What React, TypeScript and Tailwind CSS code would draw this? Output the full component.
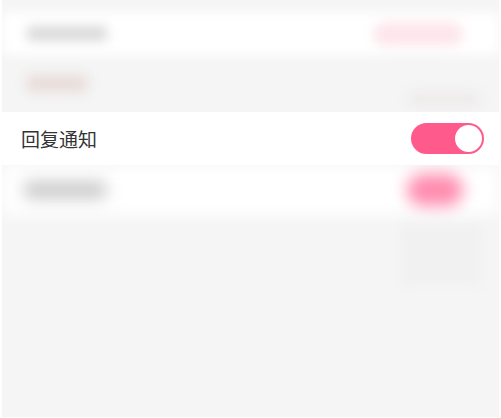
import React from "react";

export default function App() {
  return (
    <div
      className="relative w-[501px] h-[418px] bg-white overflow-hidden"
      style={{ fontFamily: '"Noto Sans CJK SC", "Noto Sans", sans-serif' }}
    >
      <div className="flex flex-col mx-[2px] h-[417px] bg-[#f5f5f5] overflow-hidden">
        <div className="h-[12px]" />
        {/* blurred row 1 */}
        <div className="h-[43px] bg-white flex items-center justify-between pl-[25px] pr-[36px] blur-[6px]">
          <div className="w-[80px] h-[15px] rounded bg-[#d9d9d9]" />
          <div className="w-[90px] h-[24px] rounded-full bg-[#fde6ec]" />
        </div>
        {/* blurred gray section */}
        <div className="h-[57px] flex items-center justify-between pl-[25px] pr-[20px] blur-[6px]">
          <div className="w-[60px] h-[17px] rounded bg-[#e8dcd8]" />
          <div className="w-[70px] h-[14px] mt-[30px] rounded bg-[#eeeaea]" />
        </div>
        <div className="h-[53px]" />
        {/* blurred row 4 */}
        <div className="h-[50px] bg-white flex items-center justify-between pl-[22px] pr-[36px] blur-[8px]">
          <div className="w-[82px] h-[18px] rounded bg-[#cbcbcb]" />
          <div className="w-[56px] h-[32px] rounded-full bg-[#ff8db0]" />
        </div>
        <div className="flex-1 flex justify-end pr-[18px] blur-[5px]">
          <div className="w-[80px] h-[60px] mt-[10px] bg-[#f1f1f1]" />
        </div>
      </div>
      {/* highlighted row */}
      <div className="absolute left-0 right-0 top-[112px] h-[53px] bg-white flex items-center justify-between pl-[21px] pr-[17px]">
        <span className="text-[19px] leading-none text-[#333333]">回复通知</span>
        <div className="w-[73px] h-[31px] rounded-full bg-[#ff5a8c] flex items-center justify-end pr-[2px]">
          <div className="w-[27px] h-[27px] rounded-full bg-white" />
        </div>
      </div>
    </div>
  );
}
